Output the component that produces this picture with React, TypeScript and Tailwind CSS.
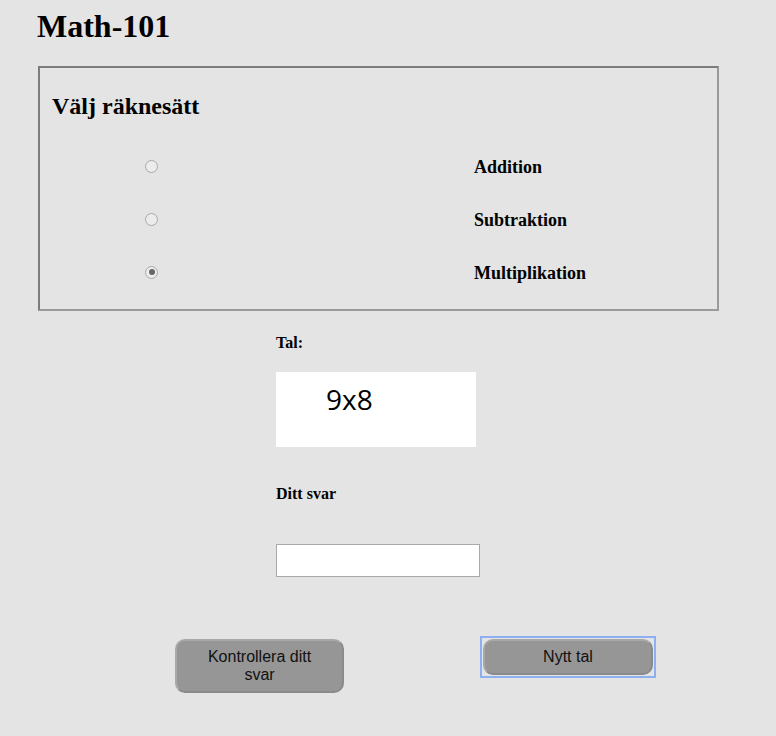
import React from 'react';

const serif = { fontFamily: '"Liberation Serif", "Times New Roman", serif' };
const sans = { fontFamily: '"Liberation Sans", Arial, sans-serif' };

const options = [
  { label: 'Addition', checked: false },
  { label: 'Subtraktion', checked: false },
  { label: 'Multiplikation', checked: true },
];

const Radio: React.FC<{ checked: boolean }> = ({ checked }) => (
  <span className="flex h-[13px] w-[13px] items-center justify-center rounded-full border border-[#a9a9a9] bg-[#ececec]">
    {checked && <span className="h-[6px] w-[6px] rounded-full bg-[#666]" />}
  </span>
);

const App: React.FC = () => (
  <div className="min-h-[736px] w-[776px] bg-[#e4e4e4] text-black" style={serif}>
    <div className="pl-[37px] pt-[10px]">
      <h1 className="text-[32px] font-bold leading-[32px]">Math-101</h1>
    </div>
    <div className="ml-[38px] mt-[24px] h-[245px] w-[681px] border-2 border-[#7c7c7c] border-r-[#9a9a9a] border-b-[#9a9a9a] pl-[12px] pt-[23px]">
      <h2 className="text-[24px] font-bold leading-[30px]">Välj räknesätt</h2>
      <div className="mt-[35px] flex flex-col gap-[33px]">
        {options.map((o) => (
          <div key={o.label} className="flex h-[20px] items-center">
            <div className="w-[422px] pl-[93px]">
              <Radio checked={o.checked} />
            </div>
            <span className="pt-[2px] text-[18px] font-bold leading-[20px]">{o.label}</span>
          </div>
        ))}
      </div>
    </div>
    <div className="ml-[276px] mt-[23px]">
      <div className="text-[16px] font-bold leading-[18px]">Tal:</div>
      <div className="mt-[20px] flex h-[75px] w-[200px] items-start bg-white pl-[50px] pt-[8px]">
        <span className="text-[28px] leading-[38px]" style={{ fontFamily: '"Open Sans", "Noto Sans", sans-serif' }}>
          9x8
        </span>
      </div>
      <div className="mt-[38px] text-[16px] font-bold leading-[18px]">Ditt svar</div>
      <input
        type="text"
        className="mt-[41px] h-[33px] w-[204px] border border-[#a9a9a9] bg-white outline-none"
      />
    </div>
    <div className="mt-[62px] flex items-start">
      <div className="ml-[175px]">
        <button
          className="h-[54px] w-[169px] rounded-[10px] border-2 border-[#8a8a8a] border-t-[#a8a8a8] border-l-[#a8a8a8] bg-[#969696] text-[16px] leading-[18px] text-[#111]"
          style={sans}
        >
          Kontrollera ditt
          <br />
          svar
        </button>
      </div>
      <div className="ml-[136px] -mt-[3px] border-2 border-[#8fb0f0] p-px">
        <button
          className="block h-[36px] w-[170px] rounded-[10px] border-2 border-[#8a8a8a] border-t-[#a8a8a8] border-l-[#a8a8a8] bg-[#969696] text-[16px] leading-[18px] text-[#111]"
          style={sans}
        >
          Nytt tal
        </button>
      </div>
    </div>
  </div>
);

export default App;
